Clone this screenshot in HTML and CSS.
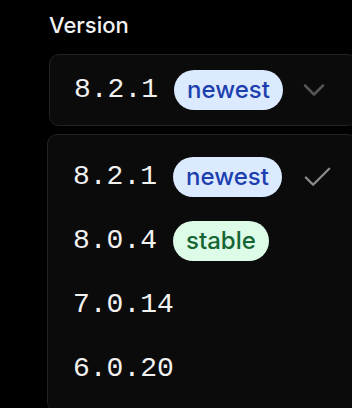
FILE: index.html
```html
<!DOCTYPE html>
<html lang="en">
<head>
    <meta charset="UTF-8">
    <meta name="viewport" content="width=device-width, initial-scale=1.0">
    <title>Version Select</title>
    <link rel="stylesheet" href="styles.css">
</head>
<body>
    <div class="field">
        <label class="field-label">Version</label>

        <button class="select-trigger">
            <span class="version">8.2.1</span>
            <span class="badge badge-newest">newest</span>
            <svg class="chevron" viewBox="0 0 24 24" fill="none" stroke="currentColor" stroke-width="2" stroke-linecap="round" stroke-linejoin="round">
                <path d="m6 9 6 6 6-6"/>
            </svg>
        </button>

        <ul class="select-list">
            <li class="option selected">
                <span class="version">8.2.1</span>
                <span class="badge badge-newest">newest</span>
                <svg class="check" viewBox="0 0 24 24" fill="none" stroke="currentColor" stroke-width="2" stroke-linecap="round" stroke-linejoin="round">
                    <path d="M20 6 9 17l-5-5"/>
                </svg>
            </li>
            <li class="option">
                <span class="version">8.0.4</span>
                <span class="badge badge-stable">stable</span>
            </li>
            <li class="option">
                <span class="version">7.0.14</span>
            </li>
            <li class="option">
                <span class="version">6.0.20</span>
            </li>
        </ul>
    </div>
</body>
</html>
```

FILE: styles.css
```css
html, body {
    overflow: hidden;
}

body {
    margin: 0;
    padding: 11px 0 0 0;
    background: #000;
    color: #f2f2f2;
    font-family: Inter, "Noto Sans", sans-serif;
}

.field {
    display: flex;
    flex-direction: column;
    width: 309px;
}

.field-label {
    margin-left: 49px;
    font-size: 22px;
    line-height: 28px;
    font-weight: 500;
    color: #f2f2f2;
}

.select-trigger {
    display: flex;
    align-items: center;
    box-sizing: border-box;
    width: 308px;
    height: 72px;
    margin: 15px 0 0 49px;
    padding: 0 24px 0 24px;
    background: #0b0b0b;
    border: 1px solid #232323;
    border-radius: 10px;
    color: #f2f2f2;
    font: inherit;
    text-align: left;
}

.version {
    font-family: "Liberation Mono", "DejaVu Sans Mono", monospace;
    font-size: 28px;
    line-height: 40px;
    color: #f2f2f2;
}

.badge {
    margin-left: 16px;
    padding: 0 13px;
    height: 40px;
    line-height: 40px;
    border-radius: 20px;
    font-size: 24px;
    font-weight: 500;
}

.badge-newest {
    background: #dbeafe;
    color: #1e40af;
}

.badge-stable {
    background: #dcfce7;
    color: #166534;
}

.chevron {
    width: 36px;
    height: 36px;
    margin-left: auto;
    color: #555;
    stroke-width: 1.7;
}

.select-list {
    list-style: none;
    box-sizing: border-box;
    width: 310px;
    margin: 8px 0 0 47px;
    padding: 10px 8px;
    background: #0b0b0b;
    border: 1px solid #232323;
    border-radius: 10px;
}

.option {
    display: flex;
    align-items: center;
    height: 64px;
    padding: 0 13px 0 17px;
}

.check {
    width: 35px;
    height: 35px;
    margin-left: auto;
    color: #8a8a8a;
    stroke-width: 1.6;
}
```
